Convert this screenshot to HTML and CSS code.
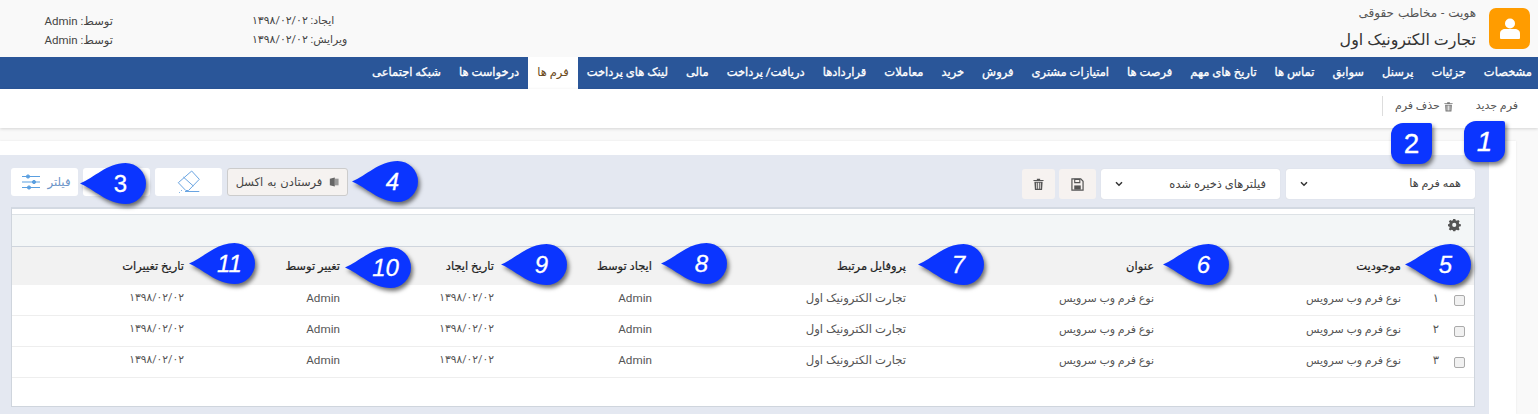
FILE: index.html
```html
<!DOCTYPE html>
<html lang="fa" dir="rtl">
<head>
<meta charset="utf-8">
<title>فرم ها</title>
<link rel="stylesheet" href="styles.css">
</head>
<body>
<svg class="defs" width="0" height="0" aria-hidden="true">
  <symbol id="drop" viewBox="0 0 66 41"><path d="M0 20.5C14 15 27 0 45.5 0a20.5 20.5 0 0 1 0 41C27 41 14 26 0 20.5Z"/></symbol>
  <symbol id="chev" viewBox="0 0 8 6"><path d="M1 1.2 4 4.2 7 1.2" fill="none" stroke="#333" stroke-width="1.5"/></symbol>
  <symbol id="trash" viewBox="0 0 12 13"><path d="M4.2 2V.8h3.6V2H11.5v1.2H.5V2ZM1.5 4h9l-.6 9H2.100Z M3.600 5.200v6.500h1V5.200Zm1.900 0v6.500h1V5.200Zm1.900 0v6.500h1V5.200Z" fill-rule="evenodd"/></symbol>
</svg>

<header class="head">
  <div class="avatar">
    <svg viewBox="0 0 24 24" width="24" height="24"><circle cx="12" cy="6.500" r="5" fill="#fff"/><path d="M2 21v-4.500C2 13.500 4.500 12 7 12h10c2.500 0 5 1.500 5 4.500V21q0 1-1 1H3q-1 0-1-1Z" fill="#fff"/></svg>
  </div>
  <div class="titles">
    <div class="subtitle">هویت - مخاطب حقوقی</div>
    <div class="title">تجارت الکترونیک اول</div>
  </div>
  <div class="meta">
    <div class="meta-dates">
      <div>ایجاد: ۱۳۹۸/۰۲/۰۲</div>
      <div>ویرایش: ۱۳۹۸/۰۲/۰۲</div>
    </div>
    <div class="meta-users">
      <div>توسط: Admin</div>
      <div>توسط: Admin</div>
    </div>
  </div>
</header>

<nav class="tabs">
  <a>مشخصات</a><a>جزئیات</a><a>پرسنل</a><a>سوابق</a><a>تماس ها</a><a>تاریخ های مهم</a><a>فرصت ها</a><a>امتیازات مشتری</a><a>فروش</a><a>خرید</a><a>معاملات</a><a>قراردادها</a><a>دریافت/ پرداخت</a><a>مالی</a><a>لینک های پرداخت</a><a class="on">فرم ها</a><a>درخواست ها</a><a>شبکه اجتماعی</a>
</nav>

<div class="actions">
  <a class="act-new">فرم جدید</a>
  <a class="act-del"><svg class="act-icon" width="9" height="11"><use href="#trash"/></svg>حذف فرم</a>
</div>

<main class="sheet">
  <section class="panel">
    <div class="filters">
      <div class="select sel-a"><span>همه فرم ها</span><svg width="8" height="6"><use href="#chev"/></svg></div>
      <div class="select sel-b"><span>فیلترهای ذخیره شده</span><svg width="8" height="6"><use href="#chev"/></svg></div>
      <button class="square sq-save"><svg viewBox="0 0 14 14" width="13" height="13"><path d="M1 1h9.500L13 3.500V13H1Z" fill="none" stroke="#555" stroke-width="1.300"/><path d="M4 1.500h5.500v3.500H4Z" fill="none" stroke="#555" stroke-width="1.200"/><path d="M3.500 8h7v4.500h-7Z" fill="#555"/></svg></button>
      <button class="square sq-trash"><svg width="11" height="12" fill="#555"><use href="#trash"/></svg></button>
      <div class="spacer"></div>
      <button class="excel"><svg viewBox="0 0 12 12" width="10" height="10"><path d="M1 2 7 .5v11L1 10Z" fill="#666"/><path d="M7 2h4.500v8H7Z" fill="#999"/></svg><span>فرستادن به اکسل</span></button>
      <button class="tool">
        <svg viewBox="0 0 24 24" width="24" height="24" fill="none" stroke="#6aa5e2" stroke-width="1"><path d="M14.700 1 22.300 9.300 11.500 20.500H8.800L1.300 12.700ZM6.300 7l10 9M8 21.500h14.300M4 20l.8.800M2 22.500h.8"/></svg>
      </button>
      <button class="tool"></button>
      <button class="tool filter-btn"><span>فیلتر</span>
        <svg viewBox="0 0 18 16" width="18" height="16" fill="#5a9fe0" stroke="#5a9fe0"><path d="M0 2.500h18M0 8h18M0 13.500h18" stroke-width="1.200"/><circle cx="6" cy="2.500" r="1.600"/><circle cx="12" cy="8" r="1.600"/><circle cx="7" cy="13.500" r="1.600"/></svg>
      </button>
    </div>

    <div class="grid-box">
      <div class="grid-strip"></div>
      <div class="grid-tools">
        <svg viewBox="0 0 24 24" width="13" height="13" fill="#555"><path fill-rule="evenodd" d="M10 1h4l.6 3 2.400 1 2.600-1.700 2.800 2.800L20.700 8.700l1 2.300 3 .6v4l-3 .6-1 2.300 1.700 2.600-2.800 2.800-2.600-1.700-2.400 1-.6 1.800h-4l-.6-1.800-2.400-1-2.600 1.700-2.800-2.800 1.700-2.600-1-2.300-3-.6v-4l3-.6 1-2.300L1.600 6.100l2.800-2.800L7 5l2.400-1ZM12 9a4 4 0 1 0 0 8 4 4 0 0 0 0-8Z" transform="translate(0 -1.500) scale(.96)"/></svg>
      </div>
      <div class="row row-head">
        <div class="col-first">موجودیت</div><div>عنوان</div><div>پروفایل مرتبط</div><div>ایجاد توسط</div><div>تاریخ ایجاد</div><div>تغییر توسط</div><div>تاریخ تغییرات</div>
      </div>
      <div class="row">
        <div class="cell-check"><i class="check"></i><span class="idx">۱</span></div><div class="svc">نوع فرم وب سرویس</div><div class="svc">نوع فرم وب سرویس</div><div>تجارت الکترونیک اول</div><div>Admin</div><div class="date">۱۳۹۸/۰۲/۰۲</div><div>Admin</div><div class="date">۱۳۹۸/۰۲/۰۲</div>
      </div>
      <div class="row">
        <div class="cell-check"><i class="check"></i><span class="idx">۲</span></div><div class="svc">نوع فرم وب سرویس</div><div class="svc">نوع فرم وب سرویس</div><div>تجارت الکترونیک اول</div><div>Admin</div><div class="date">۱۳۹۸/۰۲/۰۲</div><div>Admin</div><div class="date">۱۳۹۸/۰۲/۰۲</div>
      </div>
      <div class="row">
        <div class="cell-check"><i class="check"></i><span class="idx">۳</span></div><div class="svc">نوع فرم وب سرویس</div><div class="svc">نوع فرم وب سرویس</div><div>تجارت الکترونیک اول</div><div>Admin</div><div class="date">۱۳۹۸/۰۲/۰۲</div><div>Admin</div><div class="date">۱۳۹۸/۰۲/۰۲</div>
      </div>
    </div>
  </section>
</main>

<div class="tag-sq t1"><b>1</b></div>
<div class="tag-sq t2">2</div>
<div class="tag c3 up"><svg><use href="#drop"/></svg><b>3</b></div>
<div class="tag c4"><svg><use href="#drop"/></svg><b>4</b></div>
<div class="tag c5"><svg><use href="#drop"/></svg><b>5</b></div>
<div class="tag c6"><svg><use href="#drop"/></svg><b>6</b></div>
<div class="tag c7"><svg><use href="#drop"/></svg><b>7</b></div>
<div class="tag c8"><svg><use href="#drop"/></svg><b>8</b></div>
<div class="tag c9"><svg><use href="#drop"/></svg><b>9</b></div>
<div class="tag c10"><svg><use href="#drop"/></svg><b>10</b></div>
<div class="tag c11"><svg><use href="#drop"/></svg><b>11</b></div>
</body>
</html>
```
FILE: styles.css
```css
* { box-sizing: border-box; }
html, body { margin: 0; height: 414px; overflow: hidden; }
body {
  position: relative;
  background: #f9f9f9;
  color: #444;
  font: 11.700px/1.4 "Roboto", "DejaVu Sans", sans-serif;
}
.defs { position: absolute; }

.head { display: flex; height: 57px; padding: 8px 8px 0 45px; background: #f9f9f9; }
.avatar { width: 41px; height: 41px; border-radius: 7px; background: #ff9c00; display: flex; align-items: center; justify-content: center; }
.titles { margin-right: 13px; }
.subtitle { font-size: 12px; line-height: 14px; margin-top: -2px; color: #555; word-spacing: 1px; }
.title { font-size: 15.900px; line-height: 20px; margin-top: 10px; color: #333; }
.meta { margin-right: auto; display: flex; padding-top: 4px; line-height: 18.500px; font-size: 10.900px; color: #444; }
.meta-dates { order: 1; width: 97px; margin-left: 139px; text-align: left; white-space: nowrap; }
.meta-users { order: 2; width: 68px; text-align: right; white-space: nowrap; font-size: 11.500px; }

.tabs { display: flex; height: 32px; background: #2a5699; color: #fff; font-size: 11.500px; line-height: 31px; -webkit-text-stroke: .3px #fff; }
.tabs a { padding: 0 9px; white-space: nowrap; }
.tabs a:first-child { padding-right: 6px; }
.tabs .on { background: #fff; color: #6b4a1b; -webkit-text-stroke: 0; height: 33px; padding: 0 9px; }

.actions { display: flex; height: 39px; background: #fff; align-items: center; padding-right: 20px; box-shadow: 0 1px 3px rgba(0,0,0,.15); position: relative; font-size: 11px; color: #555; }
.act-new { margin-left: 23px; margin-top: -5px; }
.act-del { display: flex; align-items: center; gap: 4px; height: 20px; padding: 0 0 0 13px; margin-top: -5px; position: relative; }
.act-del::after { content: ""; position: absolute; left: 0; top: 0; height: 20px; border-left: 1px solid #ddd; }
.act-icon { fill: #777; }

.sheet { width: 1516px; height: 273px; margin: 13px 22px 0 0; padding-top: 14px; background: #fff; box-shadow: 0 0 2px rgba(0,0,0,.08); }
.panel { width: 1489px; margin-right: 27px; height: 259px; background: #e4e8f1; padding: 13px 14px 0 11px; }
.filters { display: flex; align-items: flex-start; gap: 5px; height: 39px; }
.select { display: flex; align-items: center; justify-content: space-between; height: 30px; margin-top: 1px; background: #fff; border-radius: 3px; padding: 0 14px; box-shadow: 0 0 1px rgba(0,0,0,.15); color: #444; }
.sel-a { width: 189px; margin-left: 1px; font-size: 11.200px; }
.sel-b { width: 179px; font-size: 11.500px; }
button { font: inherit; color: inherit; border: 0; padding: 0; cursor: default; }
.square { height: 30px; margin-top: 1px; background: #f6f2f0; border-radius: 3px; display: flex; align-items: center; justify-content: center; }
.sq-save { width: 37px; }
.sq-trash { width: 33px; margin-right: -1px; }
.spacer { flex: 1; }
.excel { width: 121px; height: 28px; background: #f5f2f0; border: 1px solid #ccc; border-radius: 3px; display: flex; align-items: center; justify-content: center; gap: 7px; font-size: 11.500px; word-spacing: 1px; }
.tool { width: 67px; height: 28px; background: #fff; border-radius: 3px; display: flex; align-items: center; justify-content: center; }
.filter-btn { color: #6a94c8; gap: 8px; padding-left: 3px; }

.grid-box { height: 200px; background: #fff; border: 1px solid #cfd5dd; border-top: 2px solid #d3d9e2; }
.grid-strip { height: 6px; border-bottom: 1px solid #dde2e6; }
.grid-tools { height: 32px; background: #f3f6f7; border-bottom: 1px solid #cfd5dd; padding: 4px 13px 0 0; }
.row { display: grid; grid-template-columns: 73px 247px 248px 254px 158px 154px 156px 1fr; align-items: center; height: 31px; padding-bottom: 3px; border-bottom: 1px solid #eee; color: #555; }
.row-head { height: 38px; padding-bottom: 0; background: #f2f2f2; color: #222; border-bottom: 0; font-size: 11.500px; -webkit-text-stroke: .2px #222; grid-template-columns: 320px 248px 254px 158px 154px 156px 1fr; }
.col-first { padding-right: 73px; }
.date { font-size: 10.700px; }
.svc { font-size: 11px; }
.cell-check { display: flex; align-items: center; }
.check { width: 11px; height: 11px; margin: 3px 9px 0 0; border: 1px solid #aaa; border-radius: 2px; background: #f1f1f1; }
.idx { margin-right: 15px; color: #555; }

.tag, .tag-sq { position: absolute; color: #fff; direction: ltr; font: 400 24px/41px "Liberation Sans", sans-serif; -webkit-text-stroke: .3px #fff; }
.tag { width: 66px; height: 41px; }
.tag svg { position: absolute; inset: 0; width: 66px; height: 41px; fill: #0b35ff; filter: drop-shadow(2px 3px 2px rgba(0,0,0,.55)); }
.tag b, .tag-sq b { font-weight: 400; font-style: italic; }
.tag b { position: absolute; right: 5px; top: 0; width: 41px; text-align: center; }
.up b { font-style: normal; }
.tag-sq { width: 41px; height: 41px; text-align: center; background: #0b35ff; border-radius: 12px 2px 12px 12px; box-shadow: 2px 3px 4px rgba(0,0,0,.5); font-size: 28px; }
.t1 { left: 1464px; top: 121px; }
.t2 { left: 1391px; top: 123px; }
.c3 { left: 80px; top: 163px; }
.c4 { left: 352px; top: 161px; }
.c5 { left: 1405px; top: 244px; }
.c6 { left: 1163px; top: 244px; }
.c7 { left: 918px; top: 244px; }
.c8 { left: 661px; top: 243px; }
.c9 { left: 501px; top: 244px; }
.c10 { left: 345px; top: 247px; }
.c11 { left: 189px; top: 243px; }
```
